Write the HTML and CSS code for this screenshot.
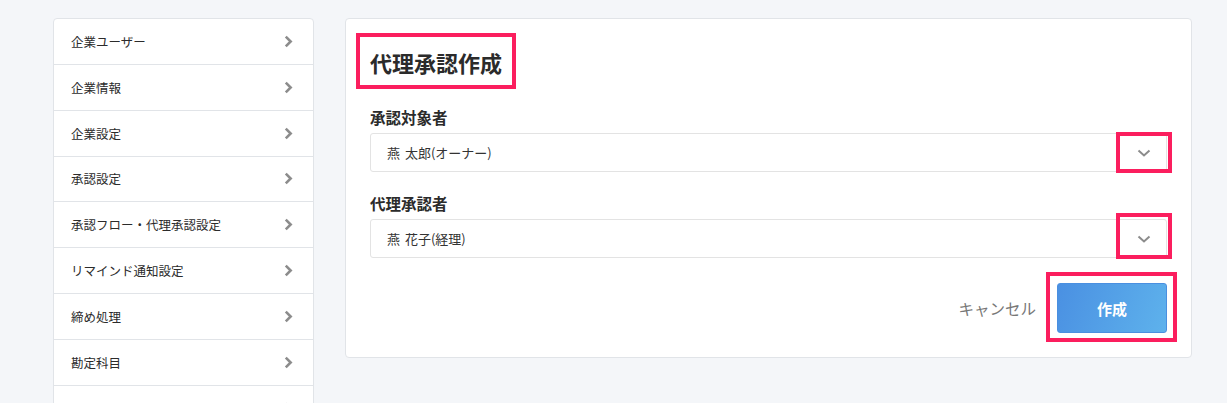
FILE: index.html
```html
<!DOCTYPE html>
<html lang="ja">
<head>
  <meta charset="UTF-8" />
  <meta name="viewport" content="width=device-width, initial-scale=1.0" />
  <title>代理承認作成</title>
  <link rel="stylesheet" href="styles.css">
</head>
<body>
  <div class="page">
    <nav class="side">
      <a class="side-item" href="#">企業ユーザー<svg class="chev" viewBox="0 0 8 12"><path d="M1.5 1.5 6 6l-4.5 4.5"/></svg></a>
      <a class="side-item" href="#">企業情報<svg class="chev" viewBox="0 0 8 12"><path d="M1.5 1.5 6 6l-4.5 4.5"/></svg></a>
      <a class="side-item" href="#">企業設定<svg class="chev" viewBox="0 0 8 12"><path d="M1.5 1.5 6 6l-4.5 4.5"/></svg></a>
      <a class="side-item" href="#">承認設定<svg class="chev" viewBox="0 0 8 12"><path d="M1.5 1.5 6 6l-4.5 4.5"/></svg></a>
      <a class="side-item" href="#">承認フロー・代理承認設定<svg class="chev" viewBox="0 0 8 12"><path d="M1.5 1.5 6 6l-4.5 4.5"/></svg></a>
      <a class="side-item" href="#">リマインド通知設定<svg class="chev" viewBox="0 0 8 12"><path d="M1.5 1.5 6 6l-4.5 4.5"/></svg></a>
      <a class="side-item" href="#">締め処理<svg class="chev" viewBox="0 0 8 12"><path d="M1.5 1.5 6 6l-4.5 4.5"/></svg></a>
      <a class="side-item" href="#">勘定科目<svg class="chev" viewBox="0 0 8 12"><path d="M1.5 1.5 6 6l-4.5 4.5"/></svg></a>
      <a class="side-item" href="#">部門<svg class="chev" viewBox="0 0 8 12"><path d="M1.5 1.5 6 6l-4.5 4.5"/></svg></a>
    </nav>

    <main class="card">
      <div class="title-row">
        <h1 class="title">代理承認作成<span class="mark mark-title"></span></h1>
      </div>

      <label class="label" for="target">承認対象者</label>
      <div class="select">
        <span class="select-text">燕 太郎(オーナー)</span>
        <svg class="down" viewBox="0 0 14 8"><path d="M1.5 1.5 7 6.5l5.5-5"/></svg>
        <span class="mark mark-select"></span>
      </div>

      <label class="label" for="proxy">代理承認者</label>
      <div class="select">
        <span class="select-text">燕 花子(経理)</span>
        <svg class="down" viewBox="0 0 14 8"><path d="M1.5 1.5 7 6.5l5.5-5"/></svg>
        <span class="mark mark-select mark-tall"></span>
      </div>

      <div class="actions">
        <a class="cancel" href="#">キャンセル</a>
        <button class="submit" type="button">作成<span class="mark mark-button"></span></button>
      </div>
    </main>
  </div>
</body>
</html>
```

FILE: styles.css
```css
body {
  margin: 0;
  background: #f4f6f9;
  font-family: "Noto Sans CJK JP", "Noto Sans", sans-serif;
  color: #333;
  overflow: hidden;
}
.page {
  display: flex;
  align-items: flex-start;
  gap: 31px;
  padding: 18px 35px 0 53px;
}
.side {
  width: 259px;
  flex: none;
  background: #fff;
  border: 1px solid #e1e4e8;
  border-radius: 4px;
}
.side-item {
  display: flex;
  align-items: center;
  justify-content: space-between;
  box-sizing: border-box;
  height: 45.85px;
  padding: 0 20px 0 17px;
  border-bottom: 1px solid #e1e4e8;
  font-size: 12.5px;
  color: #2b2b2b;
  text-decoration: none;
}
.chev {
  width: 9px;
  height: 13px;
  fill: none;
  stroke: #8c8c8c;
  stroke-width: 2.4;
}
.card {
  flex: 1;
  position: relative;
  background: #fff;
  border: 1px solid #e1e4e8;
  border-radius: 4px;
  padding: 28px 24px 24px;
}
.title {
  position: relative;
  display: inline-block;
  margin: 0;
  font-size: 22px;
  line-height: 30px;
  font-weight: bold;
  color: #2b2b2b;
}
.label {
  display: block;
  margin-top: 29px;
  font-size: 15.5px;
  line-height: 22px;
  font-weight: bold;
  color: #2b2b2b;
}
.label + .select {
  margin-top: 5px;
}
.select + .label {
  margin-top: 20px;
}
.select {
  position: relative;
  display: flex;
  align-items: center;
  justify-content: space-between;
  height: 39px;
  box-sizing: border-box;
  border: 1px solid #e3e3e3;
  border-radius: 3px;
  padding: 0 15px 0 16px;
}
.select-text {
  font-size: 13px;
  word-spacing: 2px;
}
.down {
  width: 14px;
  height: 8px;
  fill: none;
  stroke: #8c8c8c;
  stroke-width: 2;
}
.actions {
  display: flex;
  justify-content: flex-end;
  align-items: center;
  gap: 21px;
  margin-top: 25px;
}
.cancel {
  font-size: 15.5px;
  color: #777;
  text-decoration: none;
}
.submit {
  position: relative;
  width: 110px;
  height: 50px;
  border: 1px solid #4a8fe0;
  border-radius: 3px;
  background: linear-gradient(110deg, #4a90e2, #5eb2ec);
  color: #fff;
  font-family: inherit;
  font-size: 15px;
  font-weight: bold;
}
.mark {
  position: absolute;
  border: 4px solid #fb1e5e;
  pointer-events: none;
}
.mark-title {
  left: -14px;
  right: -14px;
  top: -14px;
  bottom: -12px;
}
.mark-select {
  right: -6px;
  width: 48px;
  top: -2px;
  bottom: -2px;
}
.mark-tall {
  top: -7px;
}
.mark-button {
  left: -12px;
  right: -11px;
  top: -12px;
  bottom: -10px;
}
```
